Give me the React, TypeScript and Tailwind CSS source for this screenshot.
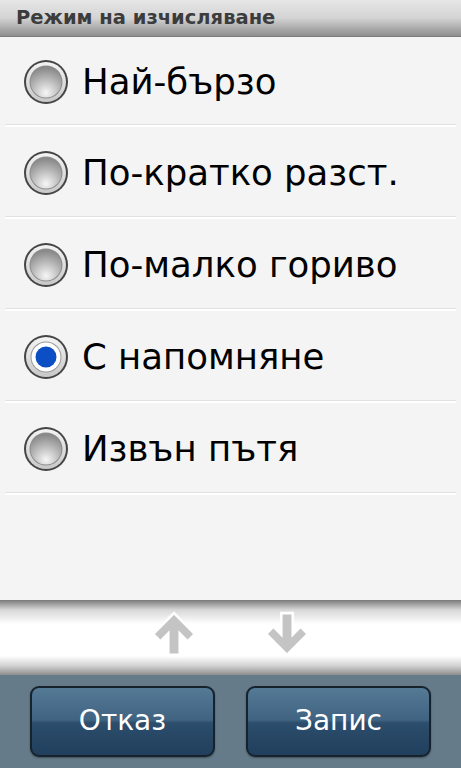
const options = [
  { label: "Най-бързо", checked: false },
  { label: "По-кратко разст.", checked: false },
  { label: "По-малко гориво", checked: false },
  { label: "С напомняне", checked: true },
  { label: "Извън пътя", checked: false },
];

function Radio({ checked }: { checked: boolean }) {
  return (
    <svg width="46" height="46" viewBox="0 0 46 46" className="shrink-0">
      <defs>
        <linearGradient id="ring" x1="0" y1="0" x2="0" y2="1">
          <stop offset="0" stopColor="#f4f4f4" />
          <stop offset="1" stopColor="#c8c8c8" />
        </linearGradient>
        <radialGradient id="ball" cx="0.5" cy="0.85" r="0.8">
          <stop offset="0" stopColor="#f6f6f6" />
          <stop offset="0.6" stopColor="#b4b4b4" />
          <stop offset="1" stopColor="#8a8a8a" />
        </radialGradient>
      </defs>
      <circle cx="23" cy="23" r="22" fill="#454545" />
      <circle cx="23" cy="23" r="20" fill="url(#ring)" />
      {checked ? (
        <>
          <circle cx="23" cy="23" r="15.5" fill="#9a9a9a" />
          <circle cx="23" cy="23" r="14.5" fill="#ffffff" />
          <circle cx="23" cy="23" r="10.5" fill="#0c4fc4" />
        </>
      ) : (
        <>
          <circle cx="23" cy="23" r="16.5" fill="#8c8c8c" />
          <circle cx="23" cy="23" r="15.5" fill="url(#ball)" />
        </>
      )}
    </svg>
  );
}

function Arrow({ down }: { down?: boolean }) {
  return (
    <svg width="46" height="46" viewBox="0 0 44 44" className={down ? "rotate-180" : ""}>
      <path
        d="M22 2 L42 22 L35 29 L27.5 21.5 L27.5 42 L16.5 42 L16.5 21.5 L9 29 L2 22 Z"
        fill="#c4c4c4"
        stroke="#ffffff"
        strokeWidth="2.5"
      />
    </svg>
  );
}

export default function App() {
  return (
    <div
      className="w-[461px] h-[768px] flex flex-col overflow-hidden bg-[#f4f4f4]"
      style={{ fontFamily: '"DejaVu Sans", sans-serif' }}
    >
      {/* header */}
      <div className="h-[37px] shrink-0 flex items-center px-4 bg-gradient-to-b from-[#e6e6e6] via-[#d4d4d4] to-[#8e8e8e] border-b border-[#7a7a7a]">
        <span className="text-[19.5px] font-bold text-[#3c3c3c] leading-none">
          Режим на изчисляване
        </span>
      </div>

      {/* options list */}
      <div className="flex-1 flex flex-col bg-[#f4f4f4]">
        {options.map((o, i) => (
          <div key={o.label} className={i === 0 ? "h-[90px] flex flex-col" : "h-[92px] flex flex-col"}>
            <div className="flex-1 flex items-center gap-[13px] pl-[23px] pt-[3px]">
              <Radio checked={o.checked} />
              <span className="text-[35.5px] text-black leading-none">{o.label}</span>
            </div>
            <div className="mx-[5px] h-[3px] border-t border-[#e2e2e2] border-b-2 border-b-white" />
          </div>
        ))}
      </div>

      {/* scroll band */}
      <div className="h-[75px] shrink-0 flex items-start justify-center gap-[67px] pt-[11px] [background-image:linear-gradient(to_bottom,#7a7a7a_0px,#d8d8d8_10px,#ffffff_24px,#ffffff_56px,#d0d0d0_66px,#8e8e8e_75px)]">
        <Arrow />
        <Arrow down />
      </div>

      {/* bottom bar */}
      <div className="h-[93px] shrink-0 bg-[#657b89] flex items-center justify-between px-[30px] pb-[1px]">
        {["Отказ", "Запис"].map((t) => (
          <button
            key={t}
            className="w-[185px] h-[71px] rounded-[9px] border-2 border-[#16222c] shadow-[0_1px_2px_rgba(0,0,0,0.35)] [background-image:linear-gradient(to_bottom,#557a96_0%,#3f6381_48%,#2c4d6c_52%,#213f5d_100%)] flex items-center justify-center"
          >
            <span className="text-[28px] text-white">{t}</span>
          </button>
        ))}
      </div>
    </div>
  );
}
